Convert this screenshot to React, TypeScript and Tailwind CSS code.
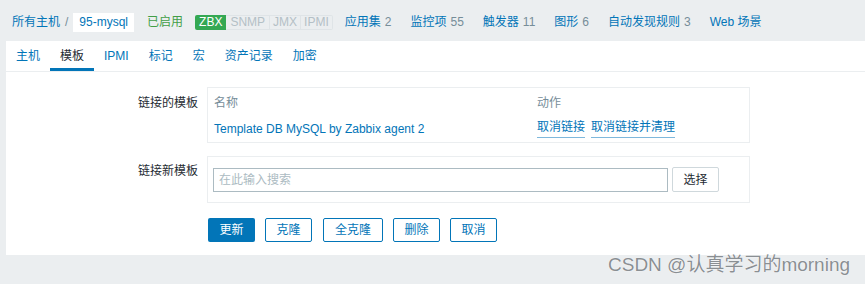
import React from 'react';

const font = { fontFamily: '"Liberation Sans", Arial, "Noto Sans CJK SC", sans-serif' };

const navLinks = [
  { label: '应用集', count: '2' },
  { label: '监控项', count: '55' },
  { label: '触发器', count: '11' },
  { label: '图形', count: '6' },
  { label: '自动发现规则', count: '3' },
  { label: 'Web 场景', count: '' },
];

const tabs = ['主机', '模板', 'IPMI', '标记', '宏', '资产记录', '加密'];

export default function App() {
  return (
    <div className="relative h-[284px] w-[865px] overflow-hidden bg-[#ebeef0] text-[12px] text-[#1f2c33]" style={font}>
      {/* Breadcrumbs + host nav */}
      <div className="flex h-[41px] items-center pl-[12px] pt-[3px]">
        <span className="text-[#0275b8]">所有主机</span>
        <span className="mx-[5px] text-[#768d99]">/</span>
        <span className="flex h-[19px] items-center bg-white px-[6px] text-[#0275b8]">95-mysql</span>
        <span className="ml-[13px] text-[#429e47]">已启用</span>
        <div className="ml-[12px] flex h-[15px] items-stretch text-[12px] leading-[15px]">
          <span className="rounded-l-[2px] bg-[#34a853] px-[4px] text-white">ZBX</span>
          <span className="border border-l-0 border-[#dfe4e7] px-[4px] leading-[13px] text-[#b4c0c6]">SNMP</span>
          <span className="border border-l-0 border-[#dfe4e7] px-[3px] leading-[13px] text-[#b4c0c6]">JMX</span>
          <span className="rounded-r-[2px] border border-l-0 border-[#dfe4e7] px-[3px] leading-[13px] text-[#b4c0c6]">IPMI</span>
        </div>
        <div className="ml-[12px] flex gap-[19px]">
          {navLinks.map((l) => (
            <span key={l.label} className="text-[#0275b8]">
              {l.label}
              {l.count && <span className="ml-[4px] text-[#768d99]">{l.count}</span>}
            </span>
          ))}
        </div>
      </div>

      {/* Main panel */}
      <div className="ml-[6px] h-[214px] bg-white">
        <div className="flex h-[31px] border-b border-[#ebeef0]">
          {tabs.map((t, i) => (
            <div
              key={t}
              className={
                'flex items-center px-[10px] pt-[2px] ' +
                (i === 1 ? 'border-b-[3px] border-[#0275b8] text-[#1f2c33]' : 'border-b-[3px] border-transparent text-[#0275b8]')
              }
            >
              {t}
            </div>
          ))}
        </div>

        <div className="pt-[15px]">
          {/* Linked templates */}
          <div className="flex">
            <div className="w-[192px] pt-[7px] text-right">链接的模板</div>
            <div className="ml-[9px] h-[56px] w-[543px] border border-[#ebeef0] px-[6px] pt-[6px]">
              <div className="flex text-[#768d99]">
                <span className="w-[323px]">名称</span>
                <span>动作</span>
              </div>
              <div className="mt-[8px] flex">
                <span className="w-[323px] text-[#0275b8]">Template DB MySQL by Zabbix agent 2</span>
                <span className="border-b border-[#7fb8dc] leading-[14px] text-[#0275b8]">取消链接</span>
                <span className="ml-[6px] border-b border-[#7fb8dc] leading-[14px] text-[#0275b8]">取消链接并清理</span>
              </div>
            </div>
          </div>

          {/* New template */}
          <div className="mt-[13px] flex">
            <div className="w-[192px] pt-[6px] text-right">链接新模板</div>
            <div className="ml-[9px] h-[47px] w-[543px] border border-[#ebeef0] pl-[5px] pt-[10px]">
              <div className="flex items-center gap-[4px]">
                <div className="flex h-[24px] w-[455px] items-center border border-[#acbbc2] px-[5px] text-[#acbbc2]">
                  在此输入搜索
                </div>
                <button className="h-[25px] w-[47px] rounded-[2px] border border-[#cfd8dc] bg-white text-[#1f2c33]">选择</button>
              </div>
            </div>
          </div>

          {/* Buttons */}
          <div className="ml-[202px] mt-[15px] flex gap-[10px]">
            <button className="h-[24px] w-[47px] rounded-[2px] bg-[#0275b8] text-white">更新</button>
            <button className="h-[24px] w-[47px] rounded-[2px] border border-[#0275b8] bg-white text-[#0275b8]">克隆</button>
            <button className="ml-[1px] h-[24px] w-[60px] rounded-[2px] border border-[#0275b8] bg-white text-[#0275b8]">全克隆</button>
            <button className="h-[24px] w-[47px] rounded-[2px] border border-[#0275b8] bg-white text-[#0275b8]">删除</button>
            <button className="h-[24px] w-[47px] rounded-[2px] border border-[#0275b8] bg-white text-[#0275b8]">取消</button>
          </div>
        </div>
      </div>

      {/* Watermark */}
      <div
        className="absolute left-[608px] top-[251px] text-[19px] text-[#8a8f93]"
        style={{ fontFamily: '"Liberation Sans", Arial, "Noto Sans CJK SC", sans-serif', textShadow: '0 0 1px #fff, 0 0 1px #fff' }}
      >
        CSDN @认真学习的morning
      </div>
    </div>
  );
}
